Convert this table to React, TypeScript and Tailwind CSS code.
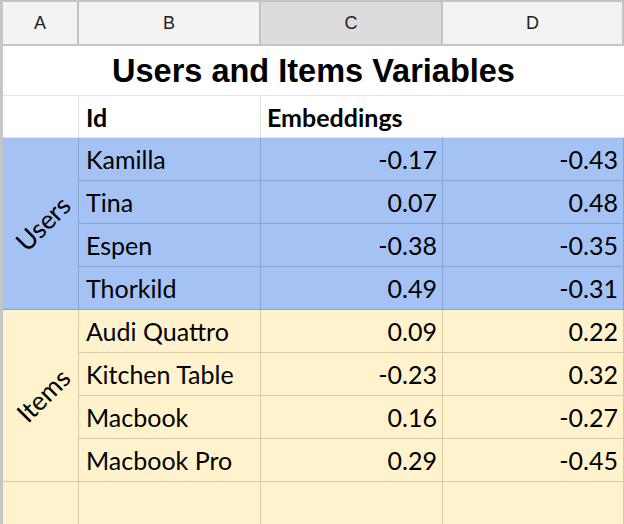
import React from 'react';

const users = [
  { name: 'Kamilla', c: '-0.17', d: '-0.43' },
  { name: 'Tina', c: '0.07', d: '0.48' },
  { name: 'Espen', c: '-0.38', d: '-0.35' },
  { name: 'Thorkild', c: '0.49', d: '-0.31' },
];

const items = [
  { name: 'Audi Quattro', c: '0.09', d: '0.22' },
  { name: 'Kitchen Table', c: '-0.23', d: '0.32' },
  { name: 'Macbook', c: '0.16', d: '-0.27' },
  { name: 'Macbook Pro', c: '0.29', d: '-0.45' },
];

const body = "font-['Lato',sans-serif] text-[25px] text-black";

const Group = ({
  label,
  rows,
  fill,
  line,
}: {
  label: string;
  rows: typeof users;
  fill: string;
  line: string;
}) => (
  <>
    <div className={`row-span-4 flex items-center justify-center border-r border-b pl-[6px] ${fill} ${line}`}>
      <span className={`${body} text-[26px] -rotate-45 select-none`}>{label}</span>
    </div>
    {rows.map((r) => (
      <React.Fragment key={r.name}>
        <div className={`flex h-[43px] items-center border-r border-b pl-[7px] pt-[2px] ${body} ${fill} ${line}`}>
          {r.name}
        </div>
        <div className={`flex h-[43px] items-center justify-end border-r border-b pr-[5px] pt-[2px] ${body} ${fill} ${line}`}>
          {r.c}
        </div>
        <div className={`flex h-[43px] items-center justify-end border-r border-b pr-[5px] pt-[2px] ${body} ${fill} ${line}`}>
          {r.d}
        </div>
      </React.Fragment>
    ))}
  </>
);

export default function App() {
  const head = "flex h-[46px] items-center justify-center border-t-2 border-b-2 border-r-2 border-[#c4c4c4] font-['Liberation_Sans',Arial,sans-serif] text-[18px] text-[#222]";
  return (
    <div className="h-[524px] w-[624px] overflow-hidden bg-white">
      <div className="grid grid-cols-[76px_182px_182px_181px] border-l-[3px] border-[#c6c6c6]">
        <div className={`${head} bg-[#f3f3f3]`}>A</div>
        <div className={`${head} bg-[#f3f3f3]`}>B</div>
        <div className={`${head} bg-[#dcdcdc]`}>C</div>
        <div className={`${head} bg-[#f3f3f3]`}>D</div>

        <div className="col-span-4 flex h-[50px] items-center justify-center border-b border-[#e2e2e2] pt-[2px] font-['Liberation_Sans',Arial,sans-serif] text-[32.5px] font-bold text-black">
          Users and Items Variables
        </div>

        <div className="h-[42px] border-r border-b border-[#e2e2e2]" />
        <div className={`flex h-[42px] items-center border-r border-b border-[#e2e2e2] pl-[7px] pt-[2px] ${body} font-bold`}>
          Id
        </div>
        <div className={`col-span-2 flex h-[42px] items-center border-b border-[#e2e2e2] pl-[6px] pt-[2px] ${body} font-bold`}>
          Embeddings
        </div>

        <Group label="Users" rows={users} fill="bg-[#a4c2f4]" line="border-[#87a3d3]" />
        <Group label="Items" rows={items} fill="bg-[#fff2cc]" line="border-[#d8caa6]" />

        <div className="h-[43px] border-r border-b border-[#d8caa6] bg-[#fff2cc]" />
        <div className="h-[43px] border-r border-b border-[#d8caa6] bg-[#fff2cc]" />
        <div className="h-[43px] border-r border-b border-[#d8caa6] bg-[#fff2cc]" />
        <div className="h-[43px] border-r border-b border-[#d8caa6] bg-[#fff2cc]" />
      </div>
    </div>
  );
}
